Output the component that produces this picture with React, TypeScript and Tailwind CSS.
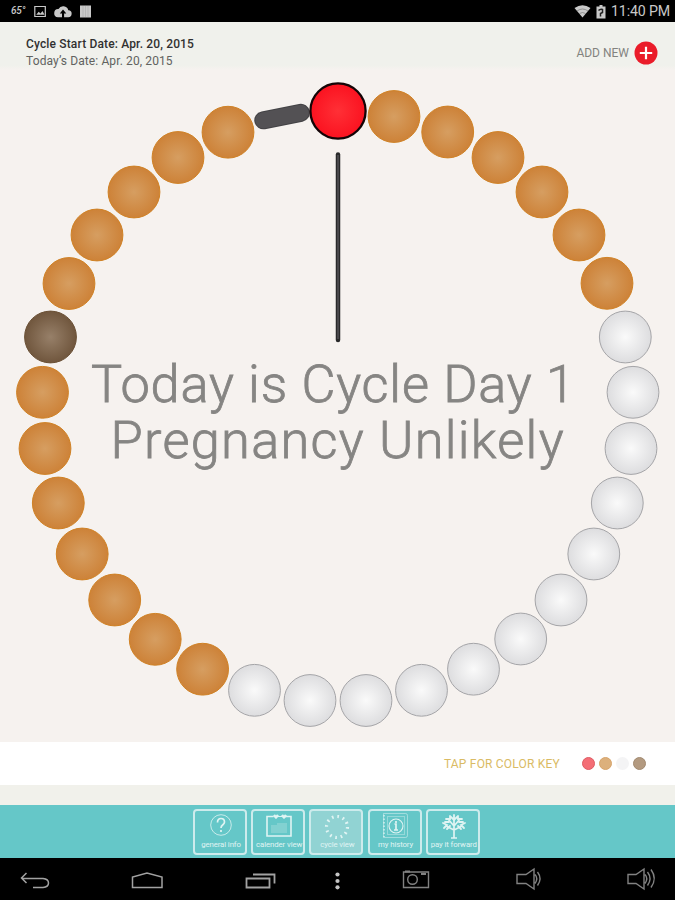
import type { ReactNode } from "react";

type Tone = "period" | "safe" | "fertile" | "check";

const beads: [number, number, Tone][] = [
  [394, 116.5, "safe"], [447.7, 132, "safe"], [498, 157.5, "safe"], [542, 192, "safe"], [579, 235, "safe"], [607, 283.3, "safe"],
  [625.3, 337, "fertile"], [633, 392.3, "fertile"], [631, 448.5, "fertile"], [617.3, 503, "fertile"], [593.8, 554, "fertile"],
  [561, 600, "fertile"], [520.7, 639, "fertile"], [473.5, 669.2, "fertile"], [421.5, 690.3, "fertile"], [366, 700.5, "fertile"],
  [310, 700.5, "fertile"], [254.5, 690.3, "fertile"],
  [202.6, 669.2, "safe"], [155.2, 639.3, "safe"], [114.7, 600, "safe"], [82.2, 554, "safe"], [58.3, 503, "safe"], [45, 448.5, "safe"],
  [42.5, 392.3, "safe"], [50.5, 337, "check"], [69, 283.5, "safe"], [97, 235, "safe"], [134, 192, "safe"], [178, 157.5, "safe"], [228, 132.2, "safe"],
];

const strokes: Record<Tone, string> = { period: "#140507", safe: "#d08225", fertile: "#a5a5a8", check: "#6b5136" };

function Gradient({ id, from, to }: { id: string; from: string; to: string }) {
  return (
    <radialGradient id={id}>
      <stop offset="0" stopColor={from} />
      <stop offset="1" stopColor={to} />
    </radialGradient>
  );
}

function StatusBar() {
  return (
    <div className="flex h-[22px] shrink-0 items-center justify-between bg-black pl-[11px] pr-[4px] text-[#c9c9c9]">
      <div className="flex items-center">
        <span className="w-[23px] text-[10px] font-medium italic leading-none tracking-[-0.2px]">65°</span>
        <svg width="60" height="16" viewBox="0 0 60 16">
          <path d="M.8 3.5h10.5v10H.8z" fill="none" stroke="currentColor" strokeWidth="1.2" />
          <path d="m2.2 11.7 2.5-3 1.8 1.7 2-2.3 2 3.6z" fill="currentColor" />
          <path d="M24 14.2H34a3.5 3.5 0 0 0 .3-7 5.3 5.3 0 0 0-9.8-1.1A4 4 0 0 0 24 14.2Z" fill="currentColor" />
          <path d="m29 6.5-3.2 4H28v5h2.1v-5h2.2z" fill="#000" />
          <path d="M46 2.500h11v12H46z" fill="currentColor" />
          <path d="M49 3v11M51.500 3v11M54 3v11" stroke="#aaa" strokeWidth=".6" />
        </svg>
      </div>
      <div className="flex items-center">
        <svg width="38" height="16" viewBox="0 0 38 16">
          <path d="M1.500 5Q9.500-.5 17.500 5L9.500 14.500Z" fill="currentColor" />
          <path d="M4 8q5.500-4 11 0M6.500 10.500q3-2 6 0" fill="none" stroke="#777" strokeWidth=".7" />
          <path d="M23.500 3.500h3V2h3v1.500h3v12h-9z" fill="currentColor" />
          <path d="M25.500 7.500q2-2 4-1v3l-2 1v3" fill="none" stroke="#222" strokeWidth="1.500" />
        </svg>
        <span className="w-[60px] whitespace-nowrap text-[14.200px] leading-none tracking-[-0.150px]">11:40 PM</span>
      </div>
    </div>
  );
}

function Header() {
  return (
    <header className="flex h-12 shrink-0 justify-between bg-gradient-to-b from-[#f0f1ec] from-90% to-[#f6f2ef] pl-[26px] pr-[17px]">
      <div className="pt-[14px] text-[12px] leading-[17px]">
        <p className="font-medium tracking-[0.150px] text-[#303030]">Cycle Start Date: Apr. 20, 2015</p>
        <p className="tracking-[0.110px] text-[#62625f]">Today’s Date: Apr. 20, 2015</p>
      </div>
      <button className="flex h-[62px] items-center gap-[5px] text-[12px] text-[#83837f]">
        ADD NEW
        <svg width="24" height="24" viewBox="0 0 24 24">
          <circle cx="12" cy="12" r="11.500" fill="#ea1c2a" />
          <path d="M12 5.800v12.400M5.800 12h12.400" stroke="#fff" strokeWidth="2.200" />
        </svg>
      </button>
    </header>
  );
}

function CycleWheel() {
  return (
    <main className="h-[672px] shrink-0 bg-[#f6f2ef]">
      <svg className="block" width="675" height="672" viewBox="0 70 675 672">
        <defs>
          <Gradient id="period" from="#ff3036" to="#fb1220" />
          <Gradient id="safe" from="#d69e61" to="#cd8238" />
          <Gradient id="fertile" from="#fafafa" to="#dddddf" />
          <Gradient id="check" from="#978069" to="#70563d" />
        </defs>
        <path d="M263.300 120.300 300.800 112.800" stroke="#434245" strokeWidth="18" strokeLinecap="round" />
        <path d="M263.300 120.300 300.800 112.800" stroke="#535154" strokeWidth="16" strokeLinecap="round" />
        {beads.map(([x, y, tone]) => (
          <circle key={`${x}-${y}`} cx={x} cy={y} r="25.900" fill={`url(#${tone})`} stroke={strokes[tone]} strokeWidth="1" />
        ))}
        <circle cx="338" cy="111" r="27.600" fill="url(#period)" stroke={strokes.period} strokeWidth="2.300" />
        <path d="M338 154.500v185.500" stroke="#29292a" strokeWidth="4.500" strokeLinecap="round" />
        <path d="M338 155v184" stroke="#48474a" strokeWidth="2" />
        <g fill="#868583" stroke="#868583" strokeWidth=".8" fontFamily="Roboto, sans-serif" fontSize="52.300" fontWeight="300">
          <text x="91" y="401.700" textLength="484" lengthAdjust="spacing">Today is Cycle Day 1</text>
          <text x="110.500" y="458" textLength="453" lengthAdjust="spacing">Pregnancy Unlikely</text>
        </g>
      </svg>
    </main>
  );
}

function ColorKey() {
  return (
    <div className="flex h-[43px] shrink-0 items-center justify-end bg-white pr-[29px]">
      <span className="mr-[22px] text-[12px] tracking-[0.200px] text-[#dabb64]">TAP FOR COLOR KEY</span>
      <div className="flex gap-1">
        <i className="size-[13px] rounded-full border border-[#df5b63] bg-[#f46e76]" />
        <i className="size-[13px] rounded-full border border-[#d7a46b] bg-[#dcb07c]" />
        <i className="size-[13px] rounded-full bg-[#f4f4f5]" />
        <i className="size-[13px] rounded-full border border-[#a28a70] bg-[#b39a80]" />
      </div>
    </div>
  );
}

function Tab({ label, active = false, children }: { label: string; active?: boolean; children: ReactNode }) {
  return (
    <button className={`flex h-[46px] w-[54px] flex-col items-center overflow-hidden rounded-[4px] border-2 border-[#cdebec] text-[#e0f4f3] ${active ? "bg-[#91d3d3]" : ""}`}>
      <svg className="mt-px shrink-0" width="32" height="28" viewBox="0 0 32 28" fill="none" stroke="currentColor">{children}</svg>
      <span className="whitespace-nowrap pl-[2px] text-[7.800px] leading-[9px] tracking-[-0.1px]">{label}</span>
    </button>
  );
}

function Tabs() {
  return (
    <nav className="flex h-[53px] shrink-0 gap-[4.200px] bg-[#65c7c8] pl-[193px] pt-1">
      <Tab label="general info">
        <circle cx="17" cy="13" r="10.300" strokeWidth=".8" />
        <path d="M13.500 10.500q0-4 3.500-4t3.500 3.500c0 3-3.500 2.500-3.500 6M17 18v2" strokeWidth="1.700" />
      </Tab>
      <Tab label="calender view">
        <path d="M11.500 4.500H5V24h24V4.500h-6.500" strokeWidth="1.600" />
        <path d="M11.500 4.500h11" strokeWidth="1" />
        <path d="m12 3 2 2.500L16 3m4 0 2 2.500L24 3" strokeWidth="2.500" strokeLinejoin="round" />
        <path d="M9 13h6v-2h10v10H9z" fill="#82d1d1" stroke="none" />
      </Tab>
      <Tab label="cycle view" active>
        <circle cx="17" cy="15" r="10.500" strokeWidth="3.200" strokeDasharray="1.700 3.798" />
      </Tab>
      <Tab label="my history">
        <path d="M4.500 1.500h22q2 0 2 2v20q0 2-2 2h-22z" strokeWidth="1" opacity=".5" />
        <path d="M5 3v22" strokeWidth="2" strokeDasharray="1.500 2" opacity=".65" />
        <rect x="8.500" y="4.500" width="17" height="18" opacity=".4" />
        <circle cx="17" cy="14" r="7" strokeWidth="1.100" />
        <path d="M17 9v2M15.500 12H17v6m-2 0h4" strokeWidth="1.700" />
      </Tab>
      <Tab label="pay it forward">
        <path d="M17 26V8M17 18l-8-4M17 18l8-4M17 14l-6-7M17 14l6-7M14 26h6" strokeWidth="1.700" />
        <path d="M17 3v5M14 5l3 3 3-3M9 7h4v-3M25 7h-4v-3M6 11l4 2-3 3M28 11l-4 2 3 3M12 10H8M22 10h4M13 14l-3 3M21 14l3 3" strokeWidth="1.800" strokeLinecap="round" />
      </Tab>
    </nav>
  );
}

function SystemNav() {
  return (
    <div className="h-[42px] shrink-0 bg-black">
      <svg width="675" height="42" viewBox="0 858 675 42" fill="none" stroke="#a2a2a2" strokeWidth="1.500">
        <path d="m26.500 873-5 5 5 5M22 878.500h21q5.500.5 5.500 4.500t-5.500 4.500H33" />
        <path d="M132.500 887.500V877l14.500-4 15 4v10.500z" />
        <path d="M246.500 878.500h23v9h-23zM253 874.500h21.500v9" strokeWidth="1.800" />
        <g fill="#c5c5c5" stroke="none">
          <circle cx="337.500" cy="874.500" r="2.100" />
          <circle cx="337.500" cy="881" r="2.100" />
          <circle cx="337.500" cy="887.300" r="2.100" />
        </g>
        <g stroke="#828282" strokeWidth="1.400">
          <path d="M403.500 872h25v15.500h-25z" />
          <path d="M405 871.500h5M421 874h5" strokeWidth="2" />
          <circle cx="412.500" cy="879.500" r="4.800" />
          <path d="M517 874.500h9l8-5.500v20l-8-5.500h-9zM535 874.500q3.500 4 0 9M537.500 872q5 6.500 0 13.500" />
          <path d="M628 874.500h8l8-5.500v20l-8-5.500h-8zM645 874.500q3.500 4 0 9M647.500 872q5 6.500 0 13.500M651 869.500q6.500 9 0 18" />
        </g>
      </svg>
    </div>
  );
}

export default function App() {
  return (
    <div className="flex h-[900px] w-[675px] flex-col overflow-hidden bg-[#f0f1ec] font-[Roboto,sans-serif]">
      <StatusBar />
      <Header />
      <CycleWheel />
      <ColorKey />
      <div className="h-5 shrink-0 bg-[#f1f1eb]" />
      <Tabs />
      <SystemNav />
    </div>
  );
}
